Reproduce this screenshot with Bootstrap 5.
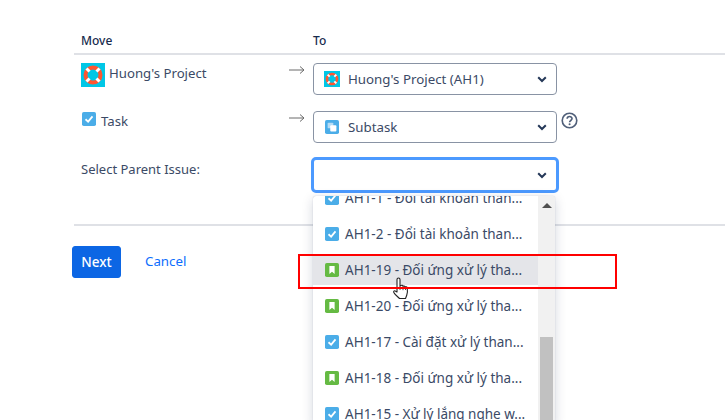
<!DOCTYPE html>
<html lang="vi">
<head>
<meta charset="utf-8">
<title>Move Issue</title>
<link href="https://cdn.jsdelivr.net/npm/bootstrap@5.3.0/dist/css/bootstrap.min.css" rel="stylesheet">
<style>
html,body{height:420px;overflow:hidden;background:#fff}
body{font-family:"Noto Sans","Open Sans",sans-serif;font-size:13.2px;color:#3b4a66;position:relative}
svg{display:block;flex:none}
.sheet{padding:33px 0 0 74px}
.head-row{height:22px;border-bottom:2px solid #dfe1e6;font-size:12px;font-weight:500;color:#172b4d;line-height:16px}
.move-cell{width:239px;padding-left:7px}
.row-line{height:48px}
.row-line.first{margin-top:8px}
.left-cell{width:214px;padding-left:7px}
.left-cell span{line-height:20px}
.parent-label{font-size:13px}
.task-ico{margin:1px 1px 0 1px}
.arrow-cell{width:25px}
.field-box{width:244px;height:32px;padding:0 0 0 10px;border:1px solid #8993a4;border-radius:4px;font-size:13.3px;color:#3b4a66;background-color:#fff;line-height:30px;--bs-form-select-bg-img:none}
.chev{position:absolute;right:9px;top:50%;margin-top:-3px}
.field-wrap{position:relative}
.focus-box{width:248px;height:36px;margin:-2px 0 0 -2px;border:3px solid #4c9aff;border-radius:5px}
.sub-ico{margin-left:1px;margin-right:1px}
.divider{height:2px;background:#dfe1e6}
.actions{margin-top:20px;margin-left:-2px}
.next-btn{background:#0c66e4;border-color:#0c66e4;color:#fff;font-size:13.5px;font-weight:500;height:32px;width:49px;padding:0;border-radius:3px;line-height:30px}
.cancel-link{margin-left:24px;color:#0d6efd;text-decoration:none;font-size:13.3px}
.help-ico{position:absolute;left:247px;top:0}
.picker{position:absolute;left:313px;top:196px;width:242px;height:230px;background:#fff;box-shadow:0 3px 12px rgba(9,30,66,.18),0 0 1px rgba(9,30,66,.3);overflow:hidden;border-radius:3px}
.pick-list{margin:-16px 0 0;padding:0;list-style:none;width:225px}
.pick-item{height:36px;display:flex;align-items:center;padding:0 0 0 12px;gap:6px;white-space:nowrap;font-size:13.5px;color:#3b4a66}
.pick-item.on{background:#e4e5e9;height:29px;margin:3.5px 0}
.scroll-rail{position:absolute;right:0;top:0;width:17px;height:100%;background:#f1f1f1}
.scroll-thumb{position:absolute;right:2px;top:141px;width:13px;height:90px;background:#c1c1c1}
.scroll-up{position:absolute;left:4px;top:7px;width:0;height:0;border-left:5px solid transparent;border-right:5px solid transparent;border-bottom:5px solid #505050}
.callout{position:absolute;left:298px;top:254px;width:319px;height:35px;border:2px solid #f00;pointer-events:none}
.hand{position:absolute;left:392px;top:276px}
</style>
</head>
<body>
<div class="sheet">
  <div class="head-row d-flex">
    <div class="move-cell">Move</div>
    <div>To</div>
  </div>
  <div class="row-line first d-flex">
    <div class="left-cell d-flex gap-1 align-items-start">
      <svg width="24" height="24" viewBox="0 0 24 24"><rect width="24" height="24" fill="#00c7e6"/><circle cx="12" cy="12" r="7.500" fill="none" stroke="#ff5630" stroke-width="4"/><g stroke="#fff" stroke-width="3"><path d="M5.500 5.500l3 3M18.500 5.500l-3 3M5.500 18.500l3-3M18.500 18.500l-3-3"/></g></svg>
      <span>Huong's Project</span>
    </div>
    <div class="arrow-cell"><svg width="18" height="14" viewBox="0 0 18 14"><path d="M1 7h15M12 3.500 16 7l-4 3.500" fill="none" stroke="#6b6b6b" stroke-width="1"/></svg></div>
    <div class="field-box form-select field-wrap d-flex align-items-center gap-2">
      <svg width="16" height="16" viewBox="0 0 24 24"><rect width="24" height="24" fill="#00c7e6"/><circle cx="12" cy="12" r="7.500" fill="none" stroke="#ff5630" stroke-width="4"/><g stroke="#fff" stroke-width="3"><path d="M5.500 5.500l3 3M18.500 5.500l-3 3M5.500 18.500l3-3M18.500 18.500l-3-3"/></g></svg>
      <span>Huong's Project (AH1)</span>
      <svg class="chev" width="10" height="7" viewBox="0 0 10 7"><path d="M1.200 1.200 5 5l3.800-3.800" fill="none" stroke="#253858" stroke-width="2"/></svg>
    </div>
  </div>
  <div class="row-line d-flex">
    <div class="left-cell d-flex gap-1 align-items-start">
      <svg class="task-ico" width="14" height="14" viewBox="0 0 16 16"><rect width="16" height="16" rx="2" fill="#4bade8"/><path d="M4 8.300 7 11l5-6" fill="none" stroke="#fff" stroke-width="2"/></svg>
      <span>Task</span>
    </div>
    <div class="arrow-cell"><svg width="18" height="14" viewBox="0 0 18 14"><path d="M1 7h15M12 3.500 16 7l-4 3.500" fill="none" stroke="#6b6b6b" stroke-width="1"/></svg></div>
    <div class="field-box form-select field-wrap d-flex align-items-center gap-2">
      <svg class="sub-ico" width="14" height="14" viewBox="0 0 16 16"><rect width="16" height="16" rx="2" fill="#4bade8"/><rect x="3" y="3" width="6.500" height="6.500" rx="1" fill="#b5dcf5"/><rect x="6" y="6" width="7" height="7" rx="1" fill="#fff"/></svg>
      <span>Subtask</span>
      <svg class="chev" width="10" height="7" viewBox="0 0 10 7"><path d="M1.200 1.200 5 5l3.800-3.800" fill="none" stroke="#253858" stroke-width="2"/></svg>
      <svg class="help-ico" width="17" height="17" viewBox="0 0 18 18"><circle cx="9" cy="9" r="7.700" fill="#fff" stroke="#505f79" stroke-width="1.700"/><path d="M6.500 7.200c0-3.200 5.200-3.200 5.200-.2 0 2-2.600 2-2.600 3.900" fill="none" stroke="#505f79" stroke-width="1.700"/><circle cx="9.100" cy="13" r="1.100" fill="#505f79"/></svg>
    </div>
  </div>
  <div class="row-line d-flex">
    <div class="left-cell d-flex"><span class="parent-label">Select Parent Issue:</span></div>
    <div class="arrow-cell"></div>
    <div class="focus-box field-wrap">
      <svg class="chev" width="10" height="7" viewBox="0 0 10 7"><path d="M1.200 1.200 5 5l3.800-3.800" fill="none" stroke="#253858" stroke-width="2"/></svg>
    </div>
  </div>
  <div style="height:17px"></div>
  <div class="divider"></div>
  <div class="actions d-flex align-items-center">
    <button type="button" class="btn next-btn">Next</button>
    <a href="#" class="cancel-link">Cancel</a>
  </div>
</div>

<div class="picker">
  <ul class="pick-list">
    <li class="pick-item"><svg width="14" height="14" viewBox="0 0 16 16"><rect width="16" height="16" rx="2" fill="#4bade8"/><path d="M4 8.300 7 11l5-6" fill="none" stroke="#fff" stroke-width="2"/></svg><span>AH1-1 - Đổi tài khoản than...</span></li>
    <li class="pick-item"><svg width="14" height="14" viewBox="0 0 16 16"><rect width="16" height="16" rx="2" fill="#4bade8"/><path d="M4 8.300 7 11l5-6" fill="none" stroke="#fff" stroke-width="2"/></svg><span>AH1-2 - Đổi tài khoản than...</span></li>
    <li class="pick-item on"><svg width="14" height="14" viewBox="0 0 16 16"><rect width="16" height="16" rx="2" fill="#65ba43"/><path d="M5 3.500h6v9l-3-2.400-3 2.400z" fill="#fff"/></svg><span>AH1-19 - Đối ứng xử lý tha...</span></li>
    <li class="pick-item"><svg width="14" height="14" viewBox="0 0 16 16"><rect width="16" height="16" rx="2" fill="#65ba43"/><path d="M5 3.500h6v9l-3-2.400-3 2.400z" fill="#fff"/></svg><span>AH1-20 - Đối ứng xử lý tha...</span></li>
    <li class="pick-item"><svg width="14" height="14" viewBox="0 0 16 16"><rect width="16" height="16" rx="2" fill="#4bade8"/><path d="M4 8.300 7 11l5-6" fill="none" stroke="#fff" stroke-width="2"/></svg><span>AH1-17 - Cài đặt xử lý than...</span></li>
    <li class="pick-item"><svg width="14" height="14" viewBox="0 0 16 16"><rect width="16" height="16" rx="2" fill="#65ba43"/><path d="M5 3.500h6v9l-3-2.400-3 2.400z" fill="#fff"/></svg><span>AH1-18 - Đối ứng xử lý tha...</span></li>
    <li class="pick-item"><svg width="14" height="14" viewBox="0 0 16 16"><rect width="16" height="16" rx="2" fill="#4bade8"/><path d="M4 8.300 7 11l5-6" fill="none" stroke="#fff" stroke-width="2"/></svg><span>AH1-15 - Xử lý lắng nghe w...</span></li>
  </ul>
  <div class="scroll-rail"><div class="scroll-up"></div><div class="scroll-thumb"></div></div>
</div>

<svg class="hand" width="20" height="25" viewBox="0 0 20 25"><path d="M5 16V3.500a1.500 1.500 0 0 1 3 0V10l1-.6c1-.5 1.800 0 2 .8.800-.5 1.800-.2 2 .7.900-.5 2-.1 2.200 1 .3 2 .3 5-.4 7.100-.5 1.600-1 2.700-1.300 3.500H7.500C5.500 20.500 3 18.800 1.800 16.500c-.6-1.200 .8-2.300 1.800-1.300z" fill="#fff" stroke="#222" stroke-width="1.100" stroke-linejoin="round"/><path d="M8 10v4M11 10.200v4M13.500 11v3" stroke="#222" stroke-width=".8" fill="none"/></svg>
<div class="callout"></div>
</body>
</html>
